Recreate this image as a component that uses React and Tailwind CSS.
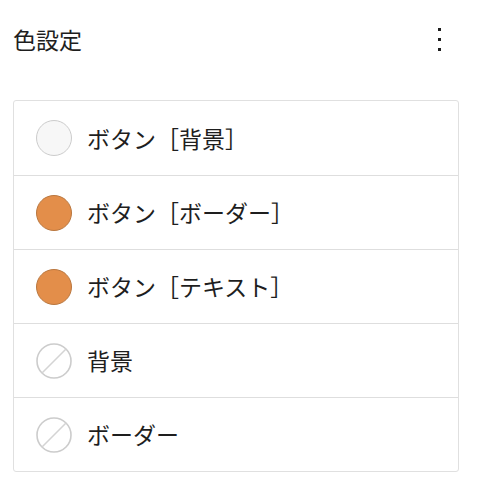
import React from "react";

const items = [
    { label: "ボタン［背景］", type: "color", color: "#f7f7f7", ring: "#cccccc" },
    { label: "ボタン［ボーダー］", type: "color", color: "#e38e4a", ring: "#b9773f" },
    { label: "ボタン［テキスト］", type: "color", color: "#e38e4a", ring: "#b9773f" },
    { label: "背景", type: "none" },
    { label: "ボーダー", type: "none" },
];

const Swatch = ({ item }) => {
    if (item.type === "none") {
        return (
            <svg width="36" height="36" viewBox="0 0 36 36" className="shrink-0">
                <circle cx="18" cy="18" r="17" fill="#ffffff" stroke="#cccccc" strokeWidth="1.6" />
                <line x1="6" y1="30" x2="30" y2="6" stroke="#d4d4d4" strokeWidth="1.6" />
            </svg>
        );
    }
    return (
        <span
            className="w-9 h-9 rounded-full border-[1.5px] shrink-0"
            style={{ backgroundColor: item.color, borderColor: item.ring }}
        />
    );
};

const App = () => {
    return (
        <div
            className="w-[486px] h-[496px] bg-white text-[#1e1e1e]"
            style={{ fontFamily: '"Noto Sans CJK JP", "Noto Sans", sans-serif' }}
        >
            <div className="h-[78px] flex items-center justify-between pl-[13px] pr-[45px]">
                <h2 className="text-[23px] font-normal">色設定</h2>
                <button className="flex flex-col gap-[7px] items-center pt-[1px]">
                    <span className="w-[3px] h-[3px] bg-[#1e1e1e]" />
                    <span className="w-[3px] h-[3px] bg-[#1e1e1e]" />
                    <span className="w-[3px] h-[3px] bg-[#1e1e1e]" />
                </button>
            </div>

            <div className="mt-[22px] ml-[13px] w-[446px] border border-[#e0e0e0] rounded-[3px]">
                {items.map((item, i) => (
                    <div
                        key={item.label}
                        className={`h-[74px] flex items-center gap-[15px] pl-[22px] ${i > 0 ? "border-t border-[#dedede]" : ""}`}
                    >
                        <Swatch item={item} />
                        <span className="text-[23px] leading-none">{item.label}</span>
                    </div>
                ))}
            </div>
        </div>
    );
};

export default App;
